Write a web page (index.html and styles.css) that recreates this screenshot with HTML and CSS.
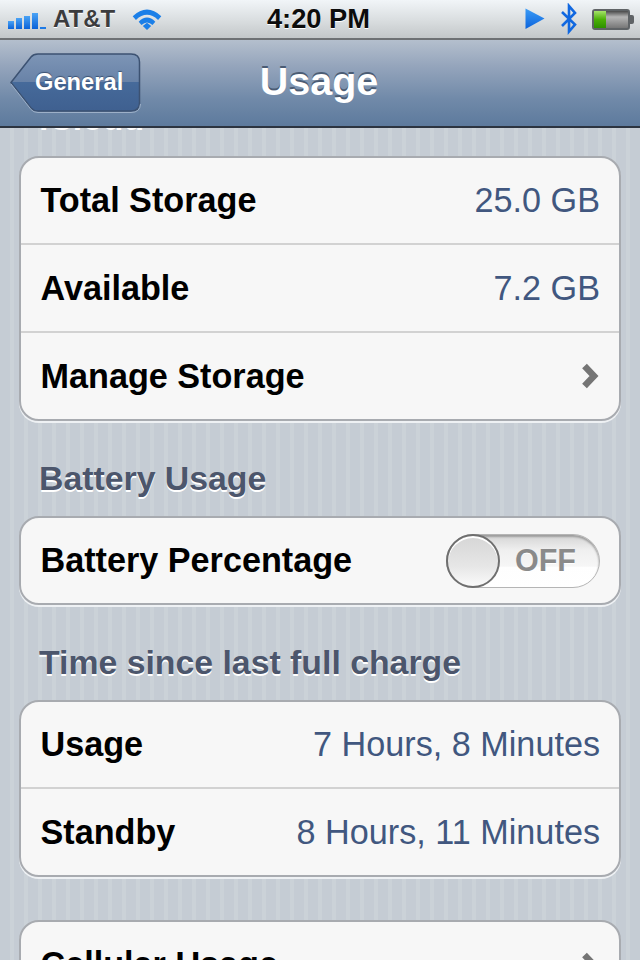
FILE: index.html
```html
<!DOCTYPE html>
<html lang="en">
<head>
<meta charset="utf-8">
<title>Usage</title>
<link rel="stylesheet" href="styles.css">
</head>
<body>
<div class="phone">
  <header class="status">
    <div class="status-side">
      <svg class="signal" width="38" height="16" viewBox="0 0 38 16">
        <defs>
          <linearGradient id="sig" x1="0" y1="0" x2="0" y2="1"><stop offset="0" stop-color="#4aa3f5"/><stop offset="1" stop-color="#0a62d8"/></linearGradient>
        </defs>
        <rect x="0" y="8" width="6" height="8" fill="url(#sig)"/>
        <rect x="8" y="5" width="6" height="11" fill="url(#sig)"/>
        <rect x="16" y="3" width="6" height="13" fill="url(#sig)"/>
        <rect x="24" y="0" width="6" height="16" fill="url(#sig)"/>
        <rect x="32" y="14" width="6" height="2" fill="#1f7be6"/>
      </svg>
      <span class="carrier">AT&amp;T</span>
      <svg class="wifi" width="32" height="24" viewBox="0 0 32 26">
        <path d="M0.5 10 Q16 -4.500 31.500 10 L28 14 Q16 3 4 14 Z" fill="#1b7fe8"/>
        <path d="M7 16 Q16 7 25 16 L22 19.500 Q16 14 10 19.500 Z" fill="#1b7fe8"/>
        <path d="M16 18 L20.500 21.500 L16 26 L11.500 21.500 Z" fill="#1b7fe8" transform="translate(0 -1)"/>
      </svg>
    </div>
    <div class="clock">4:20 PM</div>
    <div class="status-side status-right">
      <svg class="loc" width="20" height="22" viewBox="0 0 20 22"><defs><linearGradient id="loc" x1="0" y1="0" x2="0" y2="1"><stop offset="0" stop-color="#3c9cf6"/><stop offset="1" stop-color="#0b63dc"/></linearGradient></defs><path d="M0.500 0.500 L19.500 10.500 L0.500 21 Z" fill="url(#loc)"/></svg>
      <svg class="bt" width="18" height="32" viewBox="0 0 18 32"><path d="M2 9 L15 21.500 L9 28.500 L9 3 L15 10 L2 23" fill="none" stroke="#1168e0" stroke-width="2.600"/></svg>
      <div class="battery"><div class="battery-body"><div class="battery-fill"></div></div><div class="battery-tip"></div></div>
    </div>
  </header>
  <nav class="navbar">
    <a class="back">
      <svg class="back-shape" width="131" height="60" viewBox="0 0 131 60">
        <defs><linearGradient id="bk" x1="0" y1="0" x2="0" y2="1"><stop offset="0" stop-color="#7d95b6"/><stop offset="0.5" stop-color="#6882a7"/><stop offset="0.5" stop-color="#466a9a"/><stop offset="1" stop-color="#3f6090"/></linearGradient></defs>
        <path d="M1 29.500 L21 4 Q23.500 1 28 1 L121 1 Q129.500 1 129.500 9 L129.500 50 Q129.500 58 121 58 L28 58 Q23.500 58 21 55 Z" fill="url(#bk)" stroke="#3c5272" stroke-width="1.500"/>
        <path d="M1 31 L21 56.500 Q23.500 59.500 28 59.500 L121 59.500 Q130 59.500 130.500 51" fill="none" stroke="#9db0c8" stroke-width="1"/>
      </svg>
      <span class="back-label">General</span>
    </a>
    <h1 class="title">Usage</h1>
  </nav>
  <main class="content">
    <div class="scroll">
      <h2 class="section section-first">iCloud</h2>
      <section class="group">
        <div class="row"><span class="label">Total Storage</span><span class="value">25.0 GB</span></div>
        <div class="row"><span class="label">Available</span><span class="value">7.2 GB</span></div>
        <div class="row"><span class="label">Manage Storage</span><svg class="chev" width="18" height="26" viewBox="0 0 18 26"><path d="M3.500 3 L13 13 L3.500 23" fill="none" stroke="#757575" stroke-width="6.500"/></svg></div>
      </section>
      <h2 class="section section-gap">Battery Usage</h2>
      <section class="group">
        <div class="row"><span class="label">Battery Percentage</span>
          <div class="toggle"><div class="knob"></div><span class="toggle-text">OFF</span></div>
        </div>
      </section>
      <h2 class="section section-gap">Time since last full charge</h2>
      <section class="group">
        <div class="row"><span class="label">Usage</span><span class="value">7 Hours, 8 Minutes</span></div>
        <div class="row"><span class="label">Standby</span><span class="value">8 Hours, 11 Minutes</span></div>
      </section>
      <section class="group group-last">
        <div class="row"><span class="label">Cellular Usage</span><svg class="chev" width="18" height="26" viewBox="0 0 18 26"><path d="M3.500 3 L13 13 L3.500 23" fill="none" stroke="#757575" stroke-width="6.500"/></svg></div>
      </section>
    </div>
  </main>
</div>
</body>
</html>
```
FILE: styles.css
```css
* { box-sizing: border-box; margin: 0; padding: 0; }
html, body { width: 640px; height: 960px; overflow: hidden; }
body { font-family: "Liberation Sans", Arial, sans-serif; background: #c5ccd4; }
.phone { width: 640px; height: 960px; display: flex; flex-direction: column; overflow: hidden; }

.status {
  height: 40px; flex: none; display: grid; grid-template-columns: 1fr auto 1fr; align-items: center;
  padding: 0 6px 0 8px;
  background: linear-gradient(#f1f5f8, #d9dddf 55%, #c3c7c9);
  border-bottom: 2px solid #6e7174;
  box-shadow: 0 1px 0 #c9d2dc;
  position: relative; z-index: 2;
}
.status-side { display: flex; align-items: center; }
.status-right { justify-content: flex-end; }
.signal { margin-top: 4px; }
.carrier { font-size: 24px; font-weight: 700; color: #3c3c3e; margin-left: 7px; text-shadow: 0 1px 0 #fff; }
.wifi { margin-left: 16px; }
.clock { font-size: 27.3px; font-weight: 700; color: #0c0c0c; text-shadow: 0 1px 0 #fff; margin-left: -5px; }
.loc { margin-right: 15px; }
.bt { margin-right: 14px; }
.battery { display: flex; align-items: center; }
.battery-body {
  width: 38px; height: 21px; border: 2px solid #5f6366; border-radius: 3px;
  background: linear-gradient(#4a4a4a, #b5b5b5 35%, #777 100%);
}
.battery-fill { width: 12px; height: 100%; background: linear-gradient(#a6e36a, #4bb007 50%, #2d9000); }
.battery-tip { width: 4px; height: 9px; background: #5f6366; border-radius: 0 2px 2px 0; }

.navbar {
  height: 88px; flex: none; position: relative; display: flex; align-items: center;
  padding-left: 10px;
  background: linear-gradient(#b4bfcd, #95a5bc 30%, #718aa9 68%, #5d7a9d);
  border-bottom: 2px solid #2c3440;
  z-index: 2;
}
.back { position: relative; display: block; width: 131px; height: 60px; }
.back-shape { display: block; }
.back-label {
  position: absolute; left: 25px; top: 15px;
  font-size: 23.7px; font-weight: 700; color: #fff; text-shadow: 0 -1px 1px #3c5272; line-height: 29px;
}
.title {
  position: absolute; left: 0; right: 2px; top: 18px; text-align: center;
  font-size: 39.5px; line-height: 46px; font-weight: 700; color: #fff; text-shadow: 0 -2px 0 #4b5c74;
}

.content {
  flex: 1; overflow: hidden;
  background: repeating-linear-gradient(90deg, #c5ccd4 0, #c5ccd4 10px, #cbd2d8 10px, #cbd2d8 14px);
}
.scroll { margin-top: -29px; }
.section {
  font-size: 33.8px; line-height: 38px; font-weight: 700; color: #4c566c; text-shadow: 0 2px 0 #fff;
  padding-left: 39px; height: 57px;
}
.section-first { line-height: 34px; }
.section-gap { margin-top: 38px; }
.group {
  margin: 0 19px; background: #f7f7f7; border: 2px solid #a8abb0; border-radius: 20px;
  box-shadow: 0 2px 0 #eef1f4;
}
.group-last { margin-top: 43px; }
.row {
  height: 88px; display: flex; align-items: center; justify-content: space-between;
  padding: 0 20px 0 19.500px; border-top: 2px solid #d2d2d2;
}
.row:first-child { border-top: 0; height: 85px; }
.label { font-size: 34.2px; font-weight: 700; color: #000; }
.value { font-size: 34.2px; color: #41577f; margin-right: -1px; }
.chev { display: block; }

.toggle {
  position: relative; width: 154px; height: 54px; border-radius: 27px; margin-right: -1px;
  display: flex; align-items: center; justify-content: flex-end; padding-right: 23px;
  background: linear-gradient(#d4d4d4, #f0f0f0 30%, #f6f6f6 60%, #fefefe 62%, #fff);
  border: 1px solid #b5b5b5; box-shadow: inset 0 2px 2px #9e9e9e;
}
.knob {
  position: absolute; left: -1px; top: -1px; width: 54px; height: 54px; border-radius: 50%;
  background: linear-gradient(#d6d6d6, #e6e6e6 60%, #fafafa);
  border: 2px solid #6f6f6f; box-shadow: inset 0 2px 0 #fff;
}
.toggle-text { font-size: 30.5px; font-weight: 700; color: #8a8a8a; text-shadow: 0 1px 0 #fff; }
```
